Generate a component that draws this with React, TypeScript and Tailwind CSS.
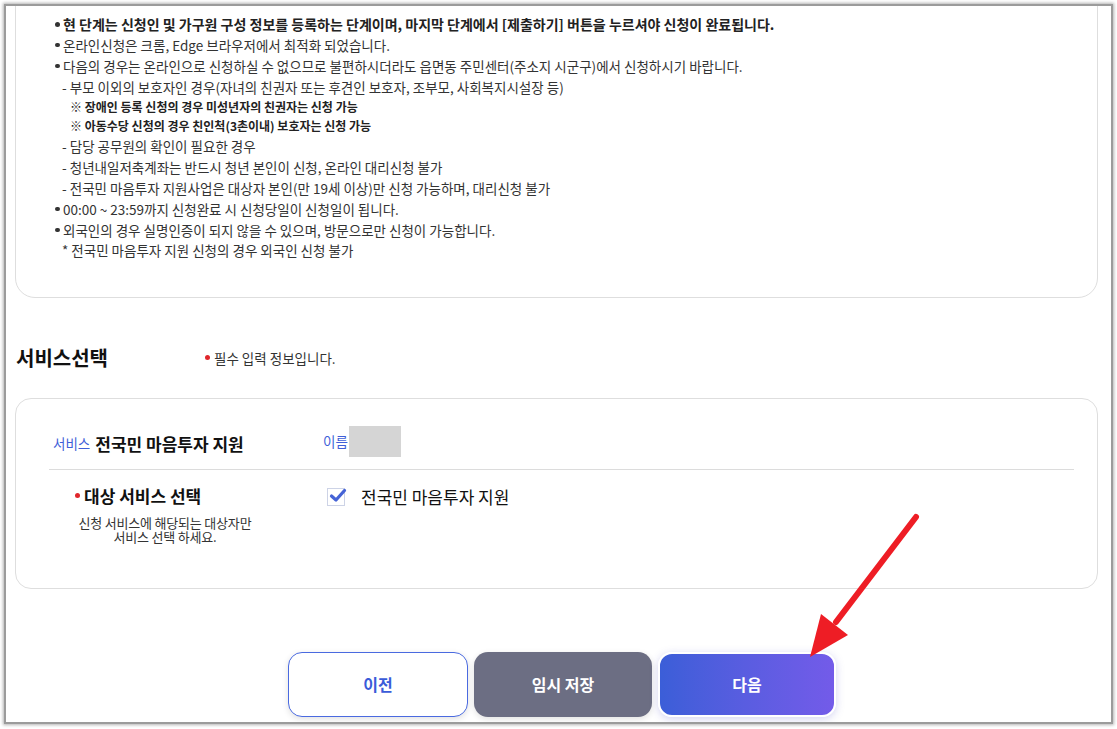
import React from "react";

const font = { fontFamily: '"Noto Sans CJK KR", "Noto Sans", sans-serif' };

function Bullet({ children, bold }: { children: React.ReactNode; bold?: boolean }) {
  return (
    <div className={`flex items-center h-[20.8px] ${bold ? "text-[14px] font-bold text-[#222]" : "text-[13.5px] text-[#333]"}`}>
      <span className="w-[8px] shrink-0 flex items-center">
        <span className="w-[4.5px] h-[4.5px] rounded-full bg-[#333] inline-block" />
      </span>
      <span>{children}</span>
    </div>
  );
}

function Sub({ children, small }: { children: React.ReactNode; small?: boolean }) {
  if (small)
    return (
      <div className="flex items-center h-[19.5px] pl-[15px] text-[12px] font-bold text-[#222]">
        {children}
      </div>
    );
  return (
    <div className="flex items-center h-[20.8px] pl-[7px] text-[13.5px] text-[#333]">{children}</div>
  );
}

export default function App() {
  return (
    <div className="w-[1117px] h-[729px] bg-white overflow-hidden" style={font}>
      <div className="pl-[4px] pt-[4px]">
        <div className="relative w-[1109px] h-[720px] border-2 border-[#9b9b9b] shadow-[0_0_3px_1px_rgba(0,0,0,0.3)] overflow-hidden bg-white">
          {/* notice card */}
          <div className="ml-[9px] w-[1083px] mt-[-40px] pt-[47px] pb-[36px] pl-[39px] border border-[#dedede] rounded-[20px]">
            <Bullet bold>현 단계는 신청인 및 가구원 구성 정보를 등록하는 단계이며, 마지막 단계에서 [제출하기] 버튼을 누르셔야 신청이 완료됩니다.</Bullet>
            <Bullet>온라인신청은 크롬, Edge 브라우저에서 최적화 되었습니다.</Bullet>
            <Bullet>다음의 경우는 온라인으로 신청하실 수 없으므로 불편하시더라도 읍면동 주민센터(주소지 시군구)에서 신청하시기 바랍니다.</Bullet>
            <Sub>- 부모 이외의 보호자인 경우(자녀의 친권자 또는 후견인 보호자, 조부모, 사회복지시설장 등)</Sub>
            <Sub small>※ 장애인 등록 신청의 경우 미성년자의 친권자는 신청 가능</Sub>
            <Sub small>※ 아동수당 신청의 경우 친인척(3촌이내) 보호자는 신청 가능</Sub>
            <Sub>- 담당 공무원의 확인이 필요한 경우</Sub>
            <Sub>- 청년내일저축계좌는 반드시 청년 본인이 신청, 온라인 대리신청 불가</Sub>
            <Sub>- 전국민 마음투자 지원사업은 대상자 본인(만 19세 이상)만 신청 가능하며, 대리신청 불가</Sub>
            <Bullet>00:00 ~ 23:59까지 신청완료 시 신청당일이 신청일이 됩니다.</Bullet>
            <Bullet>외국인의 경우 실명인증이 되지 않을 수 있으며, 방문으로만 신청이 가능합니다.</Bullet>
            <Sub>* 전국민 마음투자 지원 신청의 경우 외국인 신청 불가</Sub>
          </div>

          {/* heading */}
          <div className="flex items-center h-[28px] mt-[46px] ml-[10px]">
            <span className="w-[189px] text-[20px] font-bold text-[#111]">서비스선택</span>
            <span className="w-[5px] h-[5px] rounded-full bg-[#e0262b] mr-[4px]" />
            <span className="text-[13.5px] text-[#333]">필수 입력 정보입니다.</span>
          </div>

          {/* service card */}
          <div className="ml-[9px] w-[1083px] h-[191px] mt-[26px] border border-[#dedede] rounded-[16px] pt-[27px] pl-[33px] pr-[23px]">
            <div className="flex items-center h-[31px] pl-[4px]">
              <div className="w-[270px] flex items-baseline">
                <span className="text-[13.5px] text-[#3f5fd8] mr-[5px]">서비스</span>
                <span className="text-[17px] font-bold text-[#111] relative top-[2px]">전국민 마음투자 지원</span>
              </div>
              <span className="text-[13.5px] text-[#3f5fd8]">이름</span>
              <div className="w-[52px] h-[31px] bg-[#d5d5d5] ml-[1px]" />
            </div>
            <div className="mt-[12px] h-px bg-[#dcdcdc]" />
            <div className="flex mt-[14px]">
              <div className="w-[278px] pl-[26px]">
                <div className="flex items-center h-[24px]">
                  <span className="w-[5px] h-[5px] rounded-full bg-[#e0262b] mr-[4px]" />
                  <span className="text-[17px] font-bold text-[#111]">대상 서비스 선택</span>
                </div>
                <div className="w-[180px] text-center text-[13px] leading-[14px] text-[#333] mt-[8px] tracking-[-0.2px]">
                  신청 서비스에 해당되는 대상자만
                  <br />
                  서비스 선택 하세요.
                </div>
              </div>
              <div className="flex items-center h-[24px] mt-[1px]">
                <div className="relative w-[18px] h-[18px] border border-[#cdd3e6] bg-white">
                  <svg className="absolute left-[0px] top-[-2px]" width="20" height="18" viewBox="0 0 20 18">
                    <path d="M3.5 9 L8 13 L16.5 3.5" fill="none" stroke="#4563d6" strokeWidth="3.2" strokeLinecap="round" strokeLinejoin="round" />
                  </svg>
                </div>
                <span className="ml-[16px] text-[17px] text-[#111]">전국민 마음투자 지원</span>
              </div>
            </div>
          </div>

          {/* buttons */}
          <div className="flex justify-center gap-[6px] mt-[63px] pl-[7px]">
            <button className="w-[180px] h-[65px] rounded-[14px] border border-[#4a6ae0] bg-white text-[#3a5bd9] text-[16px] font-bold shadow-[0_2px_6px_rgba(0,0,0,0.12)]">
              이전
            </button>
            <button className="w-[178px] h-[65px] rounded-[14px] bg-[#6c6e83] text-white text-[16px] font-bold shadow-[0_2px_6px_rgba(0,0,0,0.12)]">
              임시 저장
            </button>
            <button className="w-[178px] h-[65px] rounded-[14px] border-2 border-white bg-gradient-to-r from-[#3b5ed8] to-[#735be9] text-white text-[16px] font-bold shadow-[0_2px_8px_rgba(80,80,200,0.25)]">
              다음
            </button>
          </div>
        </div>
      </div>

      {/* red arrow overlay */}
      <svg className="absolute left-0 top-0 pointer-events-none" width="1117" height="729">
        <line x1="916" y1="517" x2="836" y2="622" stroke="#ee1d25" strokeWidth="6" strokeLinecap="round" />
        <polygon points="810,657 821,614 848,635" fill="#ee1d25" />
      </svg>
    </div>
  );
}
